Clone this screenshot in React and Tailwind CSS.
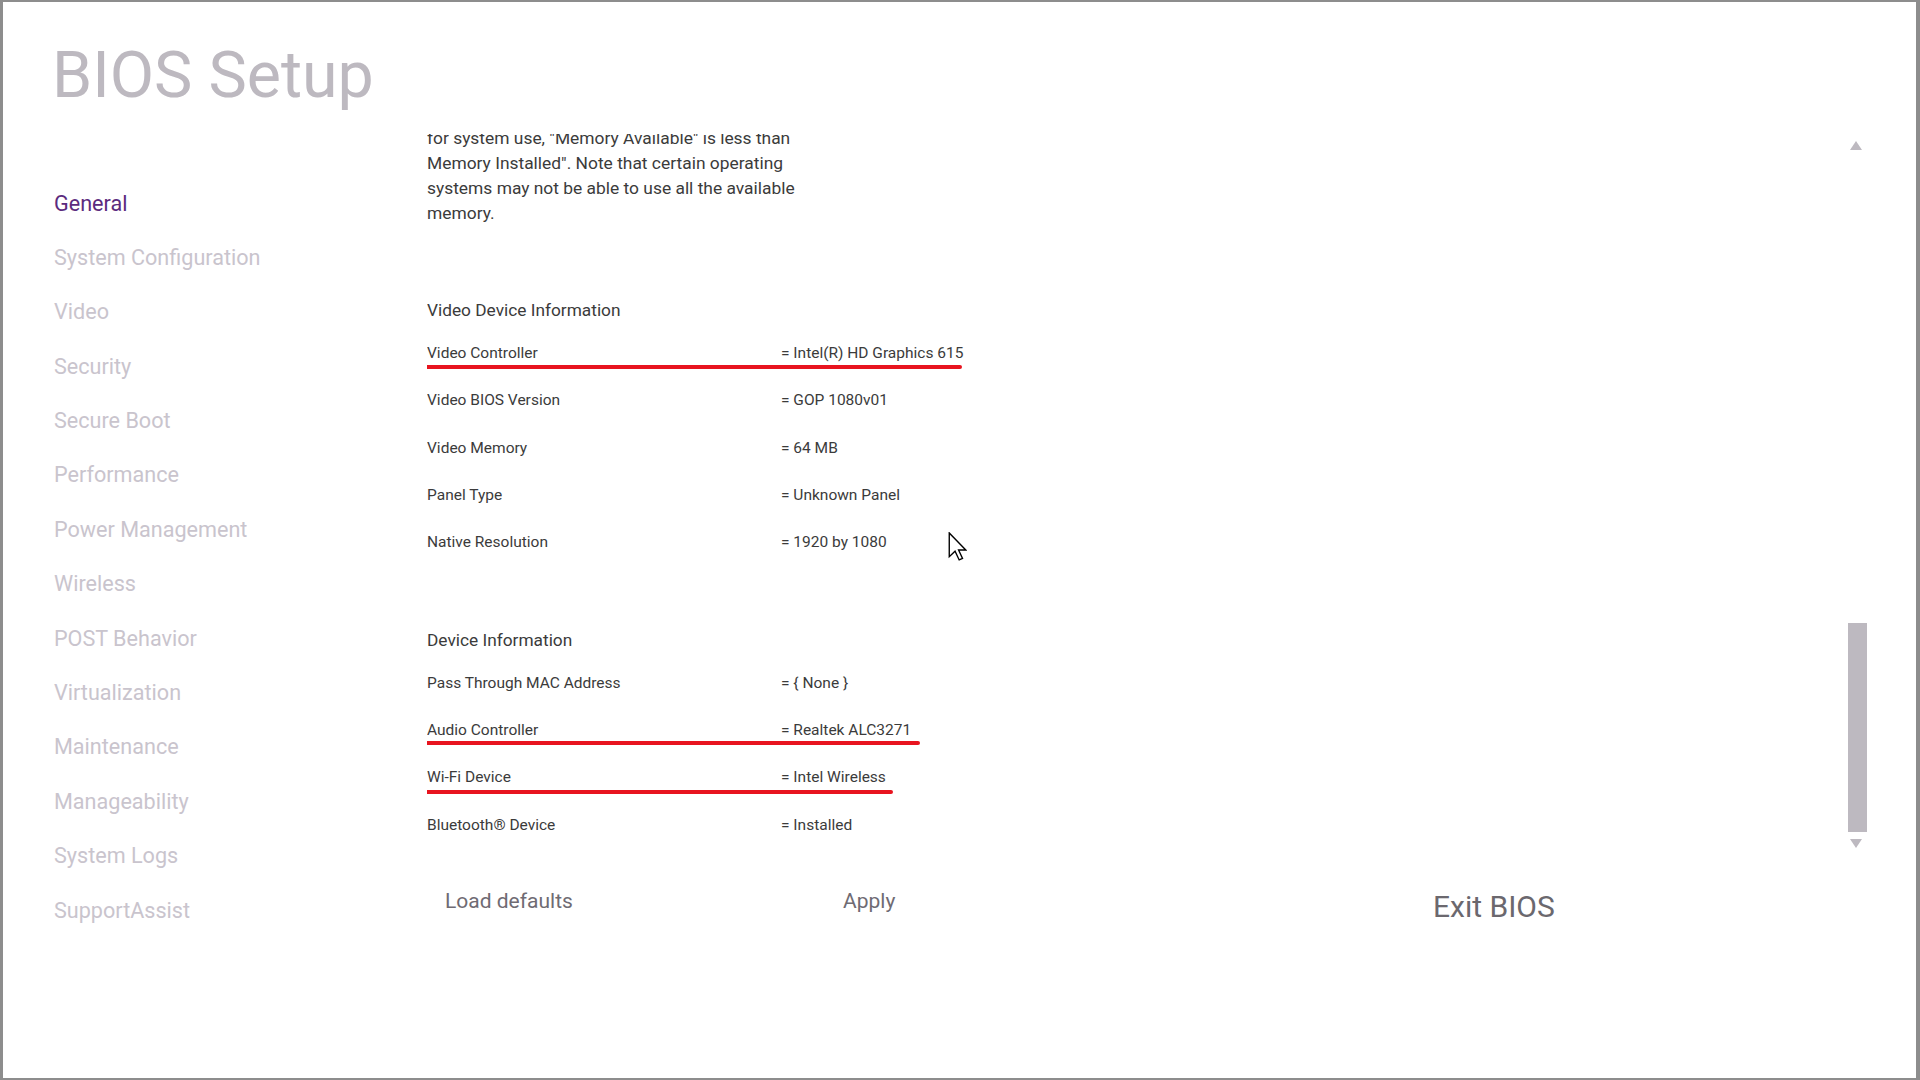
import React from "react";

const navItems = [
  "General",
  "System Configuration",
  "Video",
  "Security",
  "Secure Boot",
  "Performance",
  "Power Management",
  "Wireless",
  "POST Behavior",
  "Virtualization",
  "Maintenance",
  "Manageability",
  "System Logs",
  "SupportAssist",
];

const videoRows = [
  { label: "Video Controller", value: "= Intel(R) HD Graphics 615", mark: "w-[539px] top-[35px]" },
  { label: "Video BIOS Version", value: "= GOP 1080v01" },
  { label: "Video Memory", value: "= 64 MB" },
  { label: "Panel Type", value: "= Unknown Panel" },
  { label: "Native Resolution", value: "= 1920 by 1080" },
];

const deviceRows = [
  { label: "Pass Through MAC Address", value: "= { None }" },
  { label: "Audio Controller", value: "= Realtek ALC3271", mark: "w-[497px] top-[34px]" },
  { label: "Wi-Fi Device", value: "= Intel Wireless", mark: "w-[470px] top-[36px]" },
  { label: "Bluetooth\u00AE Device", value: "= Installed" },
];

const InfoRow = ({ label, value, mark }) => (
  <div className="relative flex items-center h-[47.35px] text-[15.5px] text-[#3b3b3b] whitespace-nowrap">
    <div className="w-[354px] shrink-0">{label}</div>
    <div>{value}</div>
    {/* red annotation underline */}
    {mark && <span className={`absolute left-[-4px] h-[4px] rounded-full bg-[#e8141f] ${mark}`}></span>}
  </div>
);

const Cursor = () => (
  <svg width="19" height="29" viewBox="0 0 12 19" className="absolute left-[945px] top-[530px]">
    <path
      d="M0.6 0.6 L0.6 16.2 L4.4 12.6 L7.1 18.3 L9.3 17.3 L6.7 11.8 L11.4 11.8 Z"
      fill="#ffffff"
      stroke="#000000"
      strokeWidth="0.9"
      strokeLinejoin="miter"
    />
  </svg>
);

export default function App() {
  return (
    <div className="relative w-[1920px] h-[1080px] bg-white border-[#8d8d8d] border-l-[3px] border-t-2 border-r-4 border-b-2 flex flex-col overflow-hidden font-['Roboto','Liberation_Sans',sans-serif]">
      {/* Title */}
      <div className="h-[132px] shrink-0 pl-[49px] pt-[40px]">
        <h1 className="text-[64.5px] leading-[66px] text-[#bdb9c0]">BIOS Setup</h1>
      </div>

      <div className="flex flex-1">
        {/* Sidebar */}
        <nav className="w-[424px] shrink-0 pl-[51px] pt-[42.5px] flex flex-col">
          {navItems.map((item, i) => (
            <div
              key={item}
              className={`h-[54.4px] flex items-center text-[21.6px] ${i === 0 ? "text-[#5c2b7e]" : "text-[#c9c4cd]"}`}
            >
              {item}
            </div>
          ))}
        </nav>

        {/* Main */}
        <div className="flex-1 flex flex-col">
          <div className="h-[718px] flex">
            <div className="flex-1 overflow-hidden">
              <p className="mt-[-8.5px] text-[17.4px] leading-[25px] text-[#3b3b3b] whitespace-nowrap">
                for system use, "Memory Available" is less than
                <br />
                Memory Installed". Note that certain operating
                <br />
                systems may not be able to use all the available
                <br />
                memory.
              </p>

              <div className="mt-[66.5px] h-[38px] flex items-center text-[17.3px] text-[#3b3b3b]">
                Video Device Information
              </div>
              {videoRows.map((r) => (
                <InfoRow key={r.label} {...r} />
              ))}

              <div className="mt-[55px] h-[38px] flex items-center text-[17.3px] text-[#3b3b3b]">
                Device Information
              </div>
              {deviceRows.map((r) => (
                <InfoRow key={r.label} {...r} />
              ))}
            </div>

            {/* Scrollbar */}
            <div className="w-[19px] mr-[49px] flex flex-col items-center pt-[7px]">
              <span className="w-0 h-0 -ml-[3px] border-l-[6px] border-r-[6px] border-b-[9px] border-l-transparent border-r-transparent border-b-[#bdb9c0]"></span>
              <div className="mt-[473px] w-[19px] h-[209px] bg-[#bdb9c0]"></div>
              <span className="mt-[7px] w-0 h-0 -ml-[3px] border-l-[6px] border-r-[6px] border-t-[9px] border-l-transparent border-r-transparent border-t-[#bdb9c0]"></span>
            </div>
          </div>

          {/* Bottom buttons */}
          <div className="h-[100px] flex items-center">
            <div className="w-[398px] pl-[18px]">
              <button className="text-[21px] text-[#6f6b73] whitespace-nowrap">Load defaults</button>
            </div>
            <div className="w-[398px] pl-[18px]">
              <button className="text-[21px] text-[#6f6b73]">Apply</button>
            </div>
            <button className="ml-[210px] mt-[8px] text-[30px] text-[#6b686e]">Exit BIOS</button>
          </div>
        </div>
      </div>

      <Cursor />
    </div>
  );
}
